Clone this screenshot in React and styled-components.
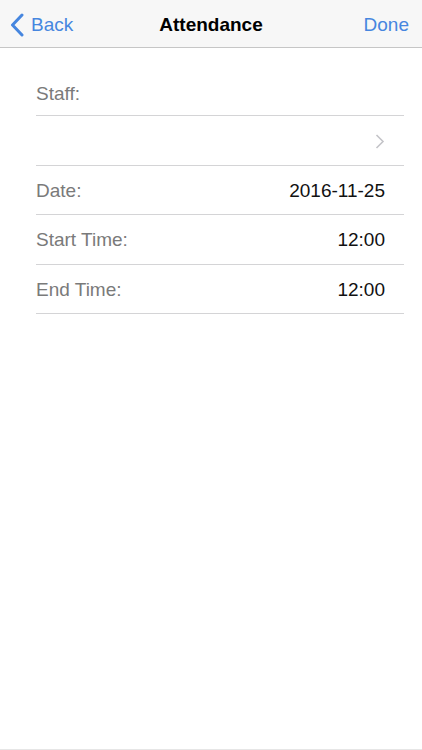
import React from "react";
import styled, { createGlobalStyle } from "styled-components";

const GlobalStyle = createGlobalStyle`
  html, body {
    margin: 0;
    padding: 0;
    background: #ffffff;
    font-family: "Liberation Sans", Arial, sans-serif;
  }
  * {
    box-sizing: border-box;
  }
`;

const Screen = styled.div`
  min-height: 100vh;
  display: flex;
  flex-direction: column;
  background: #ffffff;
  border-bottom: 1px solid #e6e6e6;
`;

const NavBar = styled.header`
  height: 48px;
  padding: 2px 13px 0 10px;
  display: flex;
  align-items: center;
  justify-content: space-between;
  background: #f7f7f7;
  border-bottom: 1px solid #c6c6c6;
  position: relative;
`;

const NavButton = styled.button`
  display: flex;
  align-items: center;
  gap: 7px;
  padding: 0;
  border: none;
  background: none;
  font-family: inherit;
  font-size: 19px;
  color: #4686df;
  cursor: pointer;
`;

const Title = styled.h1`
  position: absolute;
  left: 0;
  right: 0;
  margin: 0;
  text-align: center;
  font-size: 19px;
  font-weight: bold;
  color: #000000;
  pointer-events: none;
`;

const Form = styled.div`
  padding: 0 18px 0 36px;
`;

const Row = styled.div`
  height: ${(p) => p.$height || "49.5px"};
  display: flex;
  align-items: ${(p) => (p.$bottom ? "flex-end" : "center")};
  justify-content: space-between;
  padding: ${(p) => (p.$bottom ? "0 19px 10px 0" : "2px 19px 0 0")};
  border-bottom: 1px solid #d4d4d6;
  font-size: 19px;
  line-height: 22px;
`;

const Label = styled.span`
  color: #7a7a7a;
`;

const Value = styled.span`
  color: #111111;
`;

const BackChevron = () => (
  <svg width="14" height="24" viewBox="0 0 14 24">
    <path
      d="M12 2 L2.5 12 L12 22"
      fill="none"
      stroke="#4686df"
      strokeWidth="3"
      strokeLinecap="round"
      strokeLinejoin="round"
    />
  </svg>
);

const Disclosure = () => (
  <svg width="10" height="15" viewBox="0 0 10 15" style={{ marginLeft: "auto" }}>
    <path
      d="M1.5 1 L8 7.5 L1.5 14"
      fill="none"
      stroke="#c4c4c8"
      strokeWidth="1.6"
    />
  </svg>
);

const fields = [
  { label: "Date:", value: "2016-11-25" },
  { label: "Start Time:", value: "12:00" },
  { label: "End Time:", value: "12:00" },
];

export default function App() {
  return (
    <Screen>
      <GlobalStyle />
      <NavBar>
        <NavButton>
          <BackChevron />
          Back
        </NavButton>
        <Title>Attendance</Title>
        <NavButton>Done</NavButton>
      </NavBar>
      <Form>
        <Row $height="68px" $bottom>
          <Label>Staff:</Label>
        </Row>
        <Row>
          <Disclosure />
        </Row>
        {fields.map((f) => (
          <Row key={f.label}>
            <Label>{f.label}</Label>
            <Value>{f.value}</Value>
          </Row>
        ))}
      </Form>
    </Screen>
  );
}
